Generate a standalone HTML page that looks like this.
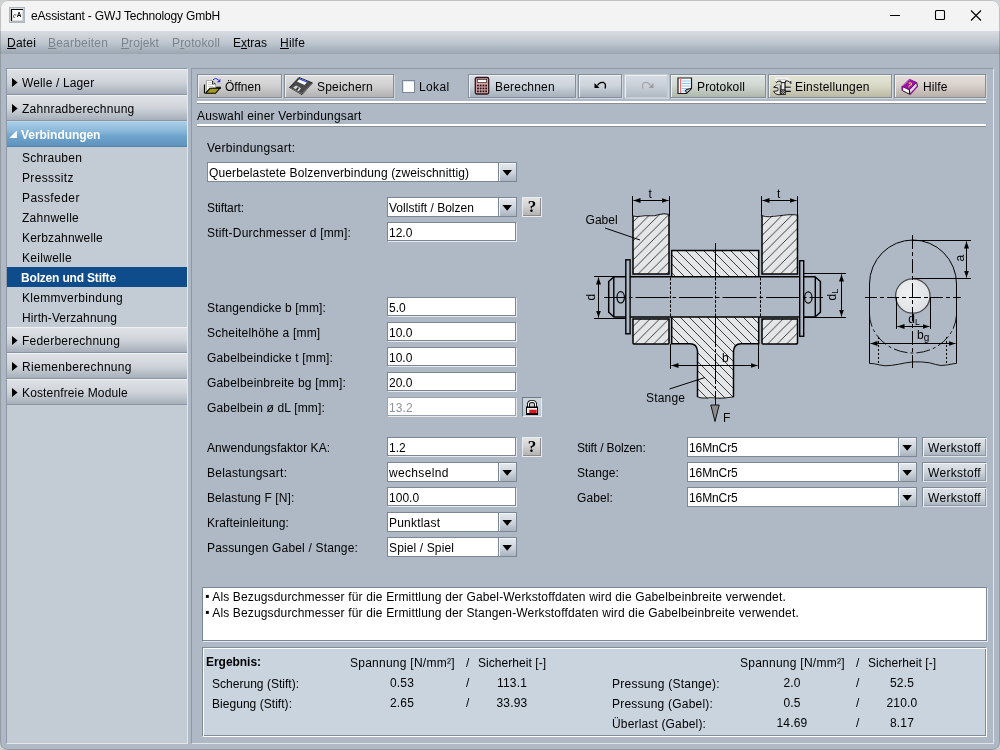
<!DOCTYPE html>
<html lang="de">
<head>
<meta charset="utf-8">
<title>eAssistant - GWJ Technology GmbH</title>
<style>
*{box-sizing:border-box;margin:0;padding:0}
html,body{width:1000px;height:750px;overflow:hidden;background:#cfcfcf}
body{font-family:"Liberation Sans",sans-serif;font-size:12px;color:#000;position:relative}
.abs,.abs>*{position:absolute}
#win{will-change:transform;left:0;top:0;width:1000px;height:750px;border-radius:8px;overflow:hidden;background:#aeb9c5}
#frame{left:0;top:0;width:1000px;height:750px;border-radius:8px;border:1px solid rgba(90,90,90,.33);z-index:9}
#title{left:0;top:0;width:1000px;height:31px;background:#f3f3f3}
#title .ttl{left:31px;top:9px;font-size:12px;line-height:15px;white-space:nowrap;color:#000;letter-spacing:-0.17px}
#menu{left:0;top:31px;width:1000px;height:23px;background:linear-gradient(#d8dce2,#bfc7d0 50%,#9ba6b1)}
#menu span{position:absolute;top:5px;line-height:14px;white-space:nowrap}
#menu span.dis{color:#7b848d}
u{text-decoration:underline;text-underline-offset:1px}
#side{left:6px;top:68px;width:182px;height:676px;background:#c3ccd5;border:1px solid #8e99a5;border-right-color:#e4e8ec;border-bottom-color:#e4e8ec}
.hd{position:absolute;left:0;width:180px;height:26px;background:linear-gradient(#dee2e6,#cfd4da 50%,#a6afba);border-top:1px solid #eef1f4;border-bottom:1px solid #8c96a2;line-height:26px;padding-left:15px;white-space:nowrap}
.hd:before{content:"";position:absolute;left:5px;top:8px;width:5.6px;height:9px;background:#000;clip-path:polygon(0 0,100% 50%,0 100%)}
.hd.sel{padding-left:14px;background:linear-gradient(#a9cde7 0%,#8dbadb 35%,#6ea3cd 60%,#5f93be 100%);color:#fff;font-weight:bold;border-top-color:#bcd9ee;border-bottom-color:#5585ad}
.hd.sel:before{left:2.3px;top:8.4px;width:7.6px;height:7.6px;background:#fff;clip-path:polygon(100% 0,100% 100%,0 100%)}
.it{position:absolute;left:0;width:180px;height:20px;line-height:22px;padding-left:15px;white-space:nowrap}
.it.sel{background:#0f4c8b;color:#fff;font-weight:bold;padding-left:14px}
#main{left:191px;top:68px;width:803px;height:676px;border:1px solid #8e99a5;border-right-color:#dfe4e9;border-bottom-color:#dfe4e9;background:#aeb9c5}
.btn{position:absolute;top:74px;height:24px;border:1px solid #858f99;background:linear-gradient(#dadfe5,#cdd4db 48%,#a5b0bc);box-shadow:inset 1px 1px 0 #eef1f4,1px 1px 0 rgba(255,255,255,.4);white-space:nowrap}
.btn span{position:absolute;top:5px;line-height:14px}
.btn svg{position:absolute}
.btn.g{background:linear-gradient(#e0e0e0,#d0d0d0 48%,#b2b2b2)}
.btn.gr{background:linear-gradient(#dfe4e0,#d0d7d1 48%,#adb7ab)}
.btn.ol{background:linear-gradient(#e5e5d8,#d9d9c8 48%,#b9b9a3)}
.btn.pk{background:linear-gradient(#e6dfdb,#d8d0cb 48%,#b9afa9)}
.btn.dis{border-color:#c3cad2;background:linear-gradient(#d6dce3,#c9d0d8 48%,#b0bac5)}
.sep{position:absolute;left:197px;width:789px;height:3px;background:#fff;border-bottom:1px solid #8b8f94}
.lbl{position:absolute;white-space:nowrap;line-height:14px}
.inp{position:absolute;height:19px;background:#fff;border:1px solid #7b8794;box-shadow:1px 1px 0 #e6eaee;line-height:14px;padding:3px 0 0 1px;white-space:nowrap;overflow:hidden}
.inp.dis{color:#8e9399;border-color:#98a3ae}
.cmb{position:absolute;height:20px;background:#fff;border:1px solid #7b8794;line-height:14px;padding:3px 0 0 1px;white-space:nowrap;overflow:hidden}
.cmb i{position:absolute;right:0;top:0;width:18px;height:18px;border-left:1px solid #7b8794;background:linear-gradient(#e6eaee,#cfd6dd 50%,#a9b4bf);box-shadow:inset 1px 1px 0 #f4f6f8}
.cmb i:after{content:"";position:absolute;left:3.4px;top:7px;width:9.6px;height:5.8px;background:#000;clip-path:polygon(0 0,100% 0,50% 100%)}
.q{position:absolute;width:20px;height:20px;border:1px solid #e8ecf0;background:linear-gradient(#e4e4e4,#cfcfcf 50%,#b0b0b0);box-shadow:inset -1px -1px 0 #8a8a8a;font-family:"Liberation Serif",serif;font-weight:bold;font-size:17px;line-height:18px;text-align:center}
.wbtn{position:absolute;left:922px;width:65px;height:20px;padding-top:1px;border:1px solid #7f8a96;border-right-color:#dfe4e9;border-bottom-color:#dfe4e9;background:linear-gradient(#dfe4e9,#cdd4db 50%,#a7b2bd);box-shadow:inset 1px 1px 0 #f2f4f6,inset -1px -1px 0 #8d98a4;line-height:18px;text-align:center}
#notes{left:202px;top:587px;width:785px;height:54px;background:#fff;border:1px solid #7b8794;box-shadow:1px 1px 0 #e6eaee}
#res{left:202px;top:647px;width:785px;height:90px;background:#c9d4df;border:1px solid #808c98;border-right-color:#fff;border-bottom-color:#fff;box-shadow:inset 1px 1px 0 #fff,inset -1px -1px 0 #808c98}

</style>
</head>
<body>
<div id="win" class="abs">
<div id="title" class="abs">
<svg style="left:9px;top:7px" width="16" height="16" viewBox="0 0 16 16"><rect x="0.5" y="0.5" width="15" height="15" fill="#dcdcdc" stroke="#a9b7c6"/><rect x="3" y="3" width="10" height="10" fill="#fff"/><path d="M2.500 14V2.500H14" fill="none" stroke="#000" stroke-width="1.200"/><path d="M2 14.500H14.500V2" fill="none" stroke="#b8b8b8" stroke-width="1"/><text x="7.800" y="10.300" font-family="Liberation Sans,sans-serif" font-size="6.500" font-weight="bold" fill="#000">A</text><text x="4" y="10.800" font-family="Liberation Serif,serif" font-size="8" font-style="italic" fill="#333">e</text></svg>
<div class="ttl">eAssistant - GWJ Technology GmbH</div>
<svg style="left:880px;top:0" width="120" height="31" viewBox="0 0 120 31" fill="none" stroke="#000" stroke-width="1.100"><path d="M10 15.500H20"/><rect x="55.500" y="10.500" width="9" height="9" rx="1"/><path d="M91 10.500L101 20.500M101 10.500L91 20.500"/></svg>
</div>
<div id="menu" class="abs">
<span class="" style="left:7px;letter-spacing:0.20px"><u>D</u>atei</span>
<span class="dis" style="left:48px;letter-spacing:0.20px"><u>B</u>earbeiten</span>
<span class="dis" style="left:121px;letter-spacing:0.09px"><u>P</u>rojekt</span>
<span class="dis" style="left:172px;letter-spacing:0.15px">P<u>r</u>otokoll</span>
<span class="" style="left:233px;letter-spacing:-0.00px">E<u>x</u>tras</span>
<span class="" style="left:280px;letter-spacing:0.20px"><u>H</u>ilfe</span>
</div>
<div id="side" class="abs">
<div class="hd" style="top:0px;letter-spacing:0.14px">Welle / Lager</div>
<div class="hd" style="top:26px;letter-spacing:0.26px">Zahnradberechnung</div>
<div class="hd sel" style="top:52px;letter-spacing:-0.05px">Verbindungen</div>
<div class="it" style="top:78px;letter-spacing:0.22px">Schrauben</div>
<div class="it" style="top:98px;letter-spacing:0.35px">Presssitz</div>
<div class="it" style="top:118px;letter-spacing:0.42px">Passfeder</div>
<div class="it" style="top:138px;letter-spacing:0.26px">Zahnwelle</div>
<div class="it" style="top:158px;letter-spacing:0.17px">Kerbzahnwelle</div>
<div class="it" style="top:178px;letter-spacing:0.29px">Keilwelle</div>
<div class="it sel" style="top:198px;letter-spacing:-0.18px">Bolzen und Stifte</div>
<div class="it" style="top:218px;letter-spacing:0.29px">Klemmverbindung</div>
<div class="it" style="top:238px;letter-spacing:0.10px">Hirth-Verzahnung</div>
<div class="hd" style="top:258px;letter-spacing:0.22px">Federberechnung</div>
<div class="hd" style="top:284px;letter-spacing:0.32px">Riemenberechnung</div>
<div class="hd" style="top:310px;letter-spacing:0.14px">Kostenfreie Module</div>
</div>
<div id="main" class="abs"></div>
<div class="btn g" style="left:197px;width:85px"><svg style="left:5px;top:1px" width="19" height="19" viewBox="0 0 19 19"><path d="M3.500 4.500H9L12.500 8V11.500L7 12.500L3.500 15.500Z" fill="#fff" stroke="#8c8c8c" stroke-width=".7"/><path d="M4.800 6.500H8.500M4.800 8.500H10.500M4.800 10.500H10" stroke="#c4c4c4" stroke-width=".8"/><path d="M9 4.500L12.800 8.300H9Z" fill="#111"/><rect x="9.800" y="6.300" width="1.300" height="1.300" fill="#fff"/><path d="M1.500 8.500V17.300" stroke="#000" stroke-width="1.200"/><path d="M2.600 9V16" stroke="#d9d165" stroke-width="1"/><path d="M13 11.200H17.200V13" fill="none" stroke="#000" stroke-width="1.100"/><path d="M2.500 17.300L7 12.300H16.800L12.500 17.300Z" fill="#a39b1e" stroke="#000" stroke-width="1.100"/><path d="M10 3.800Q12.500 1 15.500 3.800" fill="none" stroke="#2b2be6" stroke-width="1"/><path d="M13.800 6.200L17.300 2.800V6.200Z" fill="#2b2be6"/></svg><span style="left:27px;letter-spacing:0">Öffnen</span></div>
<div class="btn g" style="left:284px;width:110px"><svg style="left:3px;top:1px" width="26" height="20" viewBox="0 0 26 20"><path d="M1.500 11.500L11 1.500L24.500 7L14 18.500Z" fill="#4a4a4a" stroke="#1e1e1e" stroke-width="1"/><path d="M14 18.500L15 16.500L25 6L24.500 7.500Z" fill="#8c8c8c"/><path d="M9 5.500L12.200 2.500L19.500 5.500L16.500 9Z" fill="#fff"/><path d="M12.200 2.500L19.500 5.500L18.600 6.600L11.200 3.500Z" fill="#3050e0"/><path d="M4.500 11.800L8 9L13.500 12L11 15.800Z" fill="#d4d4d4" stroke="#222" stroke-width=".6"/><path d="M8.500 13.800L10.500 11.500" stroke="#222" stroke-width="1.600"/><path d="M2 12L13.800 17.600" stroke="#9a9a9a" stroke-width=".7"/></svg><span style="left:32px;letter-spacing:.2px">Speichern</span></div>
<div class="abs" style="left:402px;top:80px;width:13px;height:13px;background:#fff;border:1px solid #7b8794;box-shadow:inset 1px 1px 0 #dfe4ea"></div>
<div class="lbl" style="left:419px;top:80px;letter-spacing:.35px">Lokal</div>
<div class="btn" style="left:468px;width:108px"><svg style="left:5px;top:1px" width="17" height="19" viewBox="0 0 17 19"><rect x="1.300" y="1.500" width="13.400" height="16.500" rx="1.500" fill="#d5a3a7" stroke="#2a1618" stroke-width="1.300"/><rect x="3.300" y="3.500" width="9.400" height="3" fill="#fff" stroke="#3a2224" stroke-width=".7"/><g fill="#1a0a0a"><rect x="3.1" y="8.7" width="1.700" height="1.700"/><rect x="5.8" y="8.7" width="1.700" height="1.700"/><rect x="8.6" y="8.7" width="1.700" height="1.700"/><rect x="11.3" y="8.7" width="1.700" height="1.700"/><rect x="3.1" y="11.6" width="1.700" height="1.700"/><rect x="5.8" y="11.6" width="1.700" height="1.700"/><rect x="8.6" y="11.6" width="1.700" height="1.700"/><rect x="11.3" y="11.6" width="1.700" height="1.700"/><rect x="3.1" y="14.5" width="1.700" height="1.700"/><rect x="5.8" y="14.5" width="1.700" height="1.700"/><rect x="8.6" y="14.5" width="1.700" height="1.700"/><rect x="11.3" y="14.5" width="1.700" height="1.700"/></g></svg><span style="left:26px;letter-spacing:.2px">Berechnen</span></div>
<div class="btn" style="left:578px;width:44px"><svg style="left:14px;top:5px" width="16" height="12" viewBox="0 0 16 12"><path d="M1.500 3V8H6.500Z" fill="#000"/><path d="M4.500 5.500Q6.500 1.500 10.500 2.500Q13.500 4 12 8.500" fill="none" stroke="#000" stroke-width="1.300"/></svg></div>
<div class="btn dis" style="left:624px;width:44px"><svg style="left:14px;top:5px" width="16" height="12" viewBox="0 0 16 12"><path d="M14.500 3V8H9.500Z" fill="#9c9c9c"/><path d="M11.500 5.500Q9.500 1.500 5.500 2.500Q2.500 4 4 8.500" fill="none" stroke="#a6a6a6" stroke-width="1.200"/></svg></div>
<div class="btn gr" style="left:670px;width:96px"><svg style="left:6px;top:2px" width="17" height="18" viewBox="0 0 17 18"><path d="M1 1H14.500V11.500L9.500 16.500H1Z" fill="#fff" stroke="#1a1a1a" stroke-width="1.200"/><path d="M4.500 4H13.500M4.500 6.500H13.500M4.500 9H13.500M4.500 11.500H12M4.500 14H9" stroke="#8ec3ee" stroke-width="1"/><path d="M3.500 1.500V16" stroke="#ff6a6a" stroke-width="1"/><path d="M14.800 11L9.500 16.500L8.500 13Z" fill="#bdbdbd" stroke="#1a1a1a" stroke-width="1"/></svg><span style="left:26px;letter-spacing:.15px">Protokoll</span></div>
<div class="btn ol" style="left:768px;width:124px"><svg style="left:4px;top:1px" width="20" height="20" viewBox="773 76 20 20"><defs><linearGradient id="wg" x1="0" y1="0" x2="0" y2="1"><stop offset="0" stop-color="#fff"/><stop offset="1" stop-color="#9a9a9a"/></linearGradient></defs><rect x="785.200" y="87.200" width="5.600" height="4.200" fill="url(#wg)"/><path d="M785 87.200H790.800M785 91.400H790.800" stroke="#000" stroke-width="1"/><path d="M780.300 85.200L776.500 85.300L773.600 87.300L777.600 87.700Q778.700 89.300 777.600 90.900L773.600 91.300Q775 94.300 778 94.700H780.300Z" fill="#e2e2e2" stroke="#111" stroke-width=".9"/><path d="M776.500 85.600L780 85.600" stroke="#fff" stroke-width=".8"/><rect x="781.400" y="82.400" width="3.600" height="7.200" fill="#ededed"/><path d="M781.400 82.400V89.500" stroke="#555" stroke-width=".9"/><path d="M785 82.400V89.500" stroke="#000" stroke-width="1.100"/><rect x="780.300" y="89.300" width="5.500" height="5.600" fill="#1c1c1c"/><g fill="#d8d8d8"><rect x="781.300" y="90.300" width=".9" height=".9"/><rect x="783.100" y="90.300" width=".9" height=".9"/><rect x="782.200" y="91.200" width=".9" height=".9"/><rect x="784" y="91.200" width=".9" height=".9"/><rect x="781.300" y="92.100" width=".9" height=".9"/><rect x="783.100" y="92.100" width=".9" height=".9"/><rect x="782.200" y="93" width=".9" height=".9"/><rect x="784" y="93" width=".9" height=".9"/></g><path d="M775.300 77.600H787.500Q790.400 78.800 790.900 83.300L789.300 81.400Q787.800 80.300 785.400 80.600L785.200 82.500H781.300L781 80.900Q778 80.400 776.200 82.200L775.300 81.500Z" fill="#f1f1f1"/><path d="M775.600 81.700L776.300 82.400Q778 80.800 780.800 81.100L781.200 82.600H785.300L785.600 80.900Q787.800 80.600 789.200 81.700L790.900 83.600L790.700 81" fill="none" stroke="#111" stroke-width="1"/><path d="M776.500 79.500H786" stroke="#cfcfcf" stroke-width="1"/></svg><span style="left:26px;letter-spacing:.2px">Einstellungen</span></div>
<div class="btn pk" style="left:894px;width:92px"><svg style="left:6px;top:2px" width="19" height="19" viewBox="901 77 19 19"><path d="M902.200 86.400L909.400 89.600V94.200L902.400 90.600Z" fill="#fafafa" stroke="#000" stroke-width=".9"/><path d="M909.400 89.600L916.600 82.400L917.500 86.300L910 94.400Z" fill="#d9d9d9" stroke="#000" stroke-width=".9"/><path d="M910 94.400L917.500 86.300" stroke="#9a12a8" stroke-width="1.300"/><path d="M909.400 79.200L916.600 82.400L909.400 89.800L902.200 86.400Z" fill="#9a12a8" stroke="#7a0a88" stroke-width=".8"/><path d="M902.200 86.400V90.500" stroke="#9a12a8" stroke-width="1.400"/><path d="M903.500 85.200L909.800 79.800" stroke="#d9a0e0" stroke-width=".8" stroke-dasharray="1 .8"/><text x="907.600" y="87.600" font-family="Liberation Sans,sans-serif" font-weight="bold" font-size="7.500" fill="#f4e81e" transform="rotate(22 910 85)">?</text></svg><span style="left:28px;letter-spacing:.1px">Hilfe</span></div>

<div class="sep" style="top:101px"></div>
<div class="lbl " style="left:197px;top:109px;letter-spacing:0.18px">Auswahl einer Verbindungsart</div>
<div class="sep" style="top:124px"></div>
<div class="lbl " style="left:207px;top:141px;letter-spacing:0.28px">Verbindungsart:</div>
<div class="cmb" style="left:207px;top:162px;width:310px;letter-spacing:0.13px">Querbelastete Bolzenverbindung (zweischnittig)<i></i></div>
<div class="lbl " style="left:207px;top:201px;letter-spacing:-0.11px">Stiftart:</div>
<div class="cmb" style="left:387px;top:197px;width:130px;letter-spacing:0.01px">Vollstift / Bolzen<i></i></div>
<div class="q" style="left:522px;top:197px">?</div>
<div class="lbl " style="left:207px;top:226px;letter-spacing:0.19px">Stift-Durchmesser d [mm]:</div>
<div class="inp" style="left:387px;top:222px;width:129px;letter-spacing:0.01px">12.0</div>
<div class="lbl " style="left:207px;top:301px;letter-spacing:0.15px">Stangendicke b [mm]:</div>
<div class="inp" style="left:387px;top:297px;width:129px;letter-spacing:0.01px">5.0</div>
<div class="lbl " style="left:207px;top:326px;letter-spacing:0.21px">Scheitelhöhe a [mm]</div>
<div class="inp" style="left:387px;top:322px;width:129px;letter-spacing:0.01px">10.0</div>
<div class="lbl " style="left:207px;top:351px;letter-spacing:0.15px">Gabelbeindicke t [mm]:</div>
<div class="inp" style="left:387px;top:347px;width:129px;letter-spacing:0.01px">10.0</div>
<div class="lbl " style="left:207px;top:376px;letter-spacing:0.18px">Gabelbeinbreite bg [mm]:</div>
<div class="inp" style="left:387px;top:372px;width:129px;letter-spacing:0.01px">20.0</div>
<div class="lbl " style="left:207px;top:401px;letter-spacing:0.15px">Gabelbein ø dL [mm]:</div>
<div class="inp dis" style="left:387px;top:397px;width:129px;letter-spacing:0.09px">13.2</div>
<div class="abs" style="left:522px;top:397px;width:20px;height:20px;border:1px solid #6e7a86;border-right-color:#e8ecf0;border-bottom-color:#e8ecf0;background:linear-gradient(#cdd5dd,#bcc6d0)"><svg style="left:0;top:0" width="18" height="18" viewBox="0 0 18 18"><path d="M5.500 9V6.200Q5.500 3.400 9 3.400Q12.500 3.400 12.500 6.200V9" fill="none" stroke="#000" stroke-width="3"/><path d="M5.500 9V6.200Q5.500 3.400 9 3.400Q12.500 3.400 12.500 6.200V9" fill="none" stroke="#fff" stroke-width="1.200"/><rect x="3" y="8.500" width="12" height="8.500" fill="#000"/><rect x="4" y="10" width="10" height="5" fill="#eef2ee"/><rect x="6.300" y="11.700" width="7.400" height="3.500" fill="#e0141c"/></svg></div>

<div class="lbl " style="left:207px;top:441px;letter-spacing:0.05px">Anwendungsfaktor KA:</div>
<div class="inp" style="left:387px;top:437px;width:129px;letter-spacing:0.01px">1.2</div>
<div class="q" style="left:522px;top:437px">?</div>
<div class="lbl " style="left:207px;top:466px;letter-spacing:0.25px">Belastungsart:</div>
<div class="cmb" style="left:387px;top:462px;width:130px;letter-spacing:0.34px">wechselnd<i></i></div>
<div class="lbl " style="left:207px;top:491px;letter-spacing:0.08px">Belastung F [N]:</div>
<div class="inp" style="left:387px;top:487px;width:129px;letter-spacing:0.02px">100.0</div>
<div class="lbl " style="left:207px;top:516px;letter-spacing:0.12px">Krafteinleitung:</div>
<div class="cmb" style="left:387px;top:512px;width:130px;letter-spacing:0.20px">Punktlast<i></i></div>
<div class="lbl " style="left:207px;top:541px;letter-spacing:0.17px">Passungen Gabel / Stange:</div>
<div class="cmb" style="left:387px;top:537px;width:130px;letter-spacing:0.13px">Spiel / Spiel<i></i></div>
<div class="lbl " style="left:577px;top:441px;letter-spacing:-0.14px">Stift / Bolzen:</div>
<div class="cmb" style="left:687px;top:437px;width:230px;letter-spacing:-0.10px">16MnCr5<i></i></div>
<div class="wbtn" style="top:437px;letter-spacing:0.30px">Werkstoff</div>
<div class="lbl " style="left:577px;top:466px;letter-spacing:0.09px">Stange:</div>
<div class="cmb" style="left:687px;top:462px;width:230px;letter-spacing:-0.10px">16MnCr5<i></i></div>
<div class="wbtn" style="top:462px;letter-spacing:0.30px">Werkstoff</div>
<div class="lbl " style="left:577px;top:491px;letter-spacing:0.11px">Gabel:</div>
<div class="cmb" style="left:687px;top:487px;width:230px;letter-spacing:-0.10px">16MnCr5<i></i></div>
<div class="wbtn" style="top:487px;letter-spacing:0.30px">Werkstoff</div>
<svg class="abs" style="left:570px;top:180px" width="420" height="250" viewBox="570 180 420 250" font-family="Liberation Sans,sans-serif" font-size="12" fill="none" stroke="#000">
<defs>
<pattern id="h1" width="9.500" height="9.500" patternUnits="userSpaceOnUse" x="633" y="212.500"><path d="M-1 10.500L10.500 -1M-1 1L1 -1M8.500 10.500L10.500 8.500" stroke="#111" stroke-width=".8"/></pattern>
<pattern id="h2" width="9" height="9" patternUnits="userSpaceOnUse" x="677" y="251"><path d="M-1 -1L10 10M-1 8L1 10M8 -1L10 1" stroke="#111" stroke-width=".8"/></pattern>
<marker id="ar" markerWidth="8" markerHeight="6" refX="7" refY="2.500" orient="auto-start-reverse" markerUnits="userSpaceOnUse"><path d="M0 0L7 2.500L0 5Z" fill="#000" stroke="none"/></marker>
<radialGradient id="hole" cx=".4" cy=".4" r=".7"><stop offset="0" stop-color="#f0f1f2"/><stop offset="1" stop-color="#dcdfe2"/></radialGradient>
</defs>
<g stroke-width="1.500">
<!-- gabel upper blocks -->
<path d="M633 274V216l36 -1.500V274Z" fill="#e4e6e8" stroke="none"/>
<path d="M633 274V216l36 -1.500V274Z" fill="url(#h1)" stroke="none"/>
<path d="M633 216q4 1 8 .2t9 -.4t9 -1.200t10 -.3" stroke-width=".9"/>
<path d="M633 216V274H669V215"/>
<path d="M761.500 274V216l36 -1.500V274Z" fill="#e4e6e8" stroke="none"/>
<path d="M761.500 274V216l36 -1.500V274Z" fill="url(#h1)" stroke="none"/>
<path d="M761.500 215.500q4 1.500 8 1.200t9 -.9t9 -1t10 .2" stroke-width=".9"/>
<path d="M762 216V274H797.500V215"/>
<!-- stange upper -->
<rect x="672" y="250.500" width="86.500" height="26" fill="#e4e6e8" stroke="none"/>
<rect x="672" y="250.500" width="86.500" height="26" fill="url(#h2)" stroke="none"/>
<path d="M671.700 276.500V250.500H758.700V276.500"/>
<!-- gabel lower -->
<rect x="633" y="319" width="36" height="25" fill="#e4e6e8" stroke="none"/>
<rect x="633" y="319" width="36" height="25" fill="url(#h1)" stroke="none"/>
<path d="M633 319V343Q633 344 634 344H668Q669 344 669 343V319Z"/>
<rect x="762" y="319" width="35.500" height="25" fill="#e4e6e8" stroke="none"/>
<rect x="762" y="319" width="35.500" height="25" fill="url(#h1)" stroke="none"/>
<path d="M762 319V343Q762 344 763 344H796.500Q797.500 344 797.500 343V319Z"/>
<!-- stange lower -->
<path d="M672 317H758.500V343.700H741Q734 343.700 733.500 351V397.500q-4 1.500 -9 .5t-9 .5t-9 0t-8.500 -1V351Q697 343.700 690 343.700H672Z" fill="#e4e6e8" stroke="none"/>
<path d="M672 317H758.500V343.700H741Q734 343.700 733.500 351V397.500q-4 1.500 -9 .5t-9 .5t-9 0t-8.500 -1V351Q697 343.700 690 343.700H672Z" fill="url(#h2)" stroke="none"/>
<path d="M671.700 317V343.700H690Q697 343.700 697.500 351V397M758.700 317V343.700H741Q734 343.700 733.500 351V397"/>
<path d="M697.500 397q4.500 1.500 9 1t9 0t9 0t9 -1" stroke-width=".9"/>
<!-- pin -->
<path d="M613.500 276.700H815.500M613.500 317H815.500"/>
<path d="M614 276.700L608.700 281.500V312.200L614 317M815 276.700L820.400 281.500V312.200L815 317"/>
<path d="M613.800 277V317M815.300 277V317" stroke-width="1.400"/>
<!-- washers -->
<rect x="625.800" y="259.800" width="4.300" height="74" fill="#aeb9c5" stroke-width="1.400"/>
<rect x="799.700" y="260.700" width="4" height="75.600" fill="#aeb9c5" stroke-width="1.400"/>
</g>
<ellipse cx="620.700" cy="297.300" rx="3.700" ry="5.700" stroke-width="1.200"/>
<ellipse cx="808.300" cy="297.500" rx="3.700" ry="5.700" stroke-width="1.200"/>
<g stroke-width="1">
<!-- centre lines -->
<path d="M604 297.500H823" stroke-dasharray="34 3 3.500 3" stroke-dashoffset="12"/>
<path d="M715.500 243V276"/>
<path d="M715.500 317V405" stroke-dasharray="30 2 3 2"/>
<path d="M670.500 277.500V316.500M715.500 277.500V316.500M760.500 277.500V316.500" stroke-dasharray="3 1.500"/>
<!-- t dims -->
<path d="M632.500 196V216M669.500 196V216M761.500 196V216M797.500 196V216"/>
<path d="M633.500 200.500H668.500" marker-start="url(#ar)" marker-end="url(#ar)"/>
<path d="M762.500 200.500H796.500" marker-start="url(#ar)" marker-end="url(#ar)"/>
<!-- d dim -->
<path d="M594 276.500H626M594 318.500H626"/>
<path d="M598.500 277.500V317.500" marker-start="url(#ar)" marker-end="url(#ar)"/>
<!-- dL dim -->
<path d="M804 273.500H846M804 317.500H846"/>
<path d="M841.500 274.500V316.500" marker-start="url(#ar)" marker-end="url(#ar)"/>
<!-- b dim -->
<path d="M670.500 344V369M758.500 344V369"/>
<path d="M671.500 365.500H757.500" marker-start="url(#ar)" marker-end="url(#ar)"/>
<!-- leaders -->
<path d="M605 228L640 240M669.500 389L705 377.500"/>
</g>
<!-- F arrow -->
<path d="M710.800 405H719.200L715 421.500Z" fill="#8c8c8c" stroke-width=".9"/>
<!-- side view -->
<g stroke-width="1">
<path d="M869.500 363.400V284A43.500 44 0 0 1 956.500 284V363.400"/>
<path d="M869.400 363.400q5 0 10 1.500t12 .5t14 -2.500t16 -1t14 2.500t12 .5t9.200 -1.500" stroke-width=".9"/>
<circle cx="912.800" cy="296" r="17.200" fill="url(#hole)" stroke="#4a4a4a" stroke-width="1.300"/>
<path d="M869.400 313A43.600 40 0 0 0 956.600 313" stroke-dasharray="14 3 3 3" stroke-width=".9"/>
</g>
<g stroke-width="1">
<path d="M865 297.500H961" stroke-dasharray="12 3 4 3"/>
<path d="M912.500 235V368" stroke-dasharray="14 3 4 3"/>
<path d="M912.500 240.500H971M912.500 278.500H971"/>
<path d="M966.500 241.500V277.500" marker-start="url(#ar)" marker-end="url(#ar)"/>
<path d="M896.500 297V329M930.500 297V329"/>
<path d="M897.500 326.500H929.500" marker-start="url(#ar)" marker-end="url(#ar)"/>
<path d="M870.500 343.500H955.500" marker-start="url(#ar)" marker-end="url(#ar)"/>
<path d="M878.500 337V364M946.500 337V364" stroke-dasharray="2 2"/>
</g>
<g fill="#000" stroke="none">
<text x="648.500" y="198">t</text><text x="777" y="198">t</text>
<text x="585.500" y="224" letter-spacing=".05">Gabel</text>
<text x="646" y="402" letter-spacing=".2">Stange</text>
<text x="722" y="362">b</text>
<text x="723" y="421.500">F</text>
<text transform="translate(595 300.500) rotate(-90)">d</text>
<text transform="translate(836 300.500) rotate(-90)">d<tspan font-size="9" dy="2">L</tspan></text>
<text transform="translate(963.500 261.500) rotate(-90)">a</text>
<text x="908.300" y="322.600">d<tspan font-size="8.500" dy="2">L</tspan></text>
<text x="917" y="338.500">b<tspan font-size="10" dy="2">g</tspan></text>
</g>
</svg>

<div id="notes" class="abs">
<div class="lbl" style="left:2px;top:2px;letter-spacing:0.15px"><span style="position:relative;top:-1px">▪</span> Als Bezugsdurchmesser für die Ermittlung der Gabel-Werkstoffdaten wird die Gabelbeinbreite verwendet.</div>
<div class="lbl" style="left:2px;top:18px;letter-spacing:0.15px"><span style="position:relative;top:-1px">▪</span> Als Bezugsdurchmesser für die Ermittlung der Stangen-Werkstoffdaten wird die Gabelbeinbreite verwendet.</div>
</div>
<div id="res" class="abs"></div>
<div class="lbl " style="left:206px;top:655px;font-weight:bold;letter-spacing:-0.04px">Ergebnis:</div>
<div class="lbl " style="left:350px;top:656px;letter-spacing:0.25px">Spannung [N/mm²]</div>
<div class="lbl " style="left:466px;top:656px;letter-spacing:-0.33px">/</div>
<div class="lbl " style="left:478px;top:656px;letter-spacing:0.05px">Sicherheit [-]</div>
<div class="lbl " style="left:212px;top:677px;letter-spacing:0.02px">Scherung (Stift):</div>
<div class="lbl" style="left:402px;top:676px;width:100px;margin-left:-50px;text-align:center;letter-spacing:0.16px">0.53</div>
<div class="lbl " style="left:466px;top:676px;letter-spacing:-0.33px">/</div>
<div class="lbl" style="left:512px;top:676px;width:100px;margin-left:-50px;text-align:center;letter-spacing:0.19px">113.1</div>
<div class="lbl " style="left:212px;top:697px;letter-spacing:0.04px">Biegung (Stift):</div>
<div class="lbl" style="left:402px;top:696px;width:100px;margin-left:-50px;text-align:center;letter-spacing:0.16px">2.65</div>
<div class="lbl " style="left:466px;top:696px;letter-spacing:-0.33px">/</div>
<div class="lbl" style="left:512px;top:696px;width:100px;margin-left:-50px;text-align:center;letter-spacing:0.19px">33.93</div>
<div class="lbl " style="left:740px;top:656px;letter-spacing:0.25px">Spannung [N/mm²]</div>
<div class="lbl " style="left:856px;top:656px;letter-spacing:-0.33px">/</div>
<div class="lbl " style="left:868px;top:656px;letter-spacing:0.05px">Sicherheit [-]</div>
<div class="lbl " style="left:612px;top:677px;letter-spacing:0.24px">Pressung (Stange):</div>
<div class="lbl" style="left:792px;top:676px;width:100px;margin-left:-50px;text-align:center;letter-spacing:0.11px">2.0</div>
<div class="lbl " style="left:856px;top:676px;letter-spacing:-0.33px">/</div>
<div class="lbl" style="left:902px;top:676px;width:100px;margin-left:-50px;text-align:center;letter-spacing:0.16px">52.5</div>
<div class="lbl " style="left:612px;top:697px;letter-spacing:0.22px">Pressung (Gabel):</div>
<div class="lbl" style="left:792px;top:696px;width:100px;margin-left:-50px;text-align:center;letter-spacing:0.11px">0.5</div>
<div class="lbl " style="left:856px;top:696px;letter-spacing:-0.33px">/</div>
<div class="lbl" style="left:902px;top:696px;width:100px;margin-left:-50px;text-align:center;letter-spacing:0.19px">210.0</div>
<div class="lbl " style="left:612px;top:717px;letter-spacing:0.16px">Überlast (Gabel):</div>
<div class="lbl" style="left:792px;top:716px;width:100px;margin-left:-50px;text-align:center;letter-spacing:0.19px">14.69</div>
<div class="lbl " style="left:856px;top:716px;letter-spacing:-0.33px">/</div>
<div class="lbl" style="left:902px;top:716px;width:100px;margin-left:-50px;text-align:center;letter-spacing:0.16px">8.17</div>
<div id="frame"></div>
</div>
</body>
</html>
